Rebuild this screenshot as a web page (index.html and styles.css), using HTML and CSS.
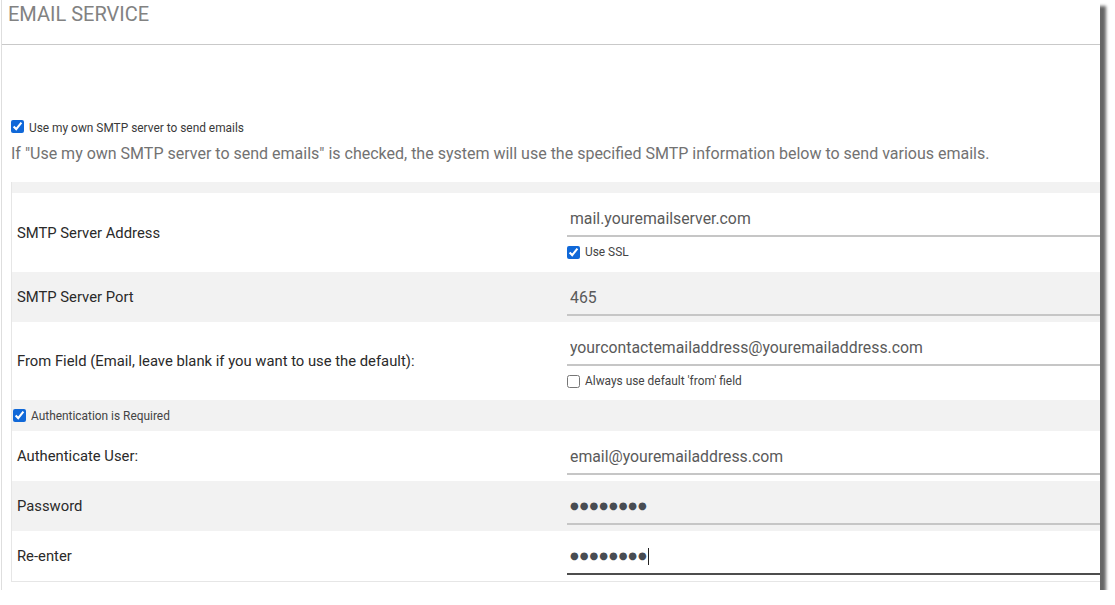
FILE: index.html
```html
<!DOCTYPE html>
<html lang="en">
<head>
<meta charset="utf-8">
<title>Email Service</title>
<link rel="stylesheet" href="styles.css">
</head>
<body>
<div class="frame">
  <header class="header">
    <h1 class="title">EMAIL SERVICE</h1>
  </header>
  <div class="content">
    <label class="top-check">
      <input type="checkbox" checked>
      <span>Use my own SMTP server to send emails</span>
    </label>
    <p class="desc">If "Use my own SMTP server to send emails" is checked, the system will use the specified SMTP information below to send various emails.</p>

    <div class="table">
      <div class="strip"></div>

      <div class="row">
        <div class="label">SMTP Server Address</div>
        <div class="value with-check">
          <input class="field" type="text" value="mail.youremailserver.com">
          <label class="sub-check"><input type="checkbox" checked><span>Use SSL</span></label>
        </div>
      </div>

      <div class="row alt">
        <div class="label">SMTP Server Port</div>
        <div class="value">
          <input class="field" type="text" value="465">
        </div>
      </div>

      <div class="row">
        <div class="label">From Field (Email, leave blank if you want to use the default):</div>
        <div class="value with-check short">
          <input class="field" type="text" value="yourcontactemailaddress@youremailaddress.com">
          <label class="sub-check"><input type="checkbox"><span>Always use default 'from' field</span></label>
        </div>
      </div>

      <div class="row alt auth">
        <label class="auth-check"><input type="checkbox" checked><span>Authentication is Required</span></label>
      </div>

      <div class="row">
        <div class="label">Authenticate User:</div>
        <div class="value">
          <input class="field" type="text" value="email@youremailaddress.com">
        </div>
      </div>

      <div class="row alt">
        <div class="label">Password</div>
        <div class="value">
          <div class="field pw">●●●●●●●●</div>
        </div>
      </div>

      <div class="row">
        <div class="label">Re-enter</div>
        <div class="value">
          <div class="field pw focused">●●●●●●●●<span class="caret"></span></div>
        </div>
      </div>
    </div>
  </div>
</div>
</body>
</html>
```

FILE: styles.css
```css
html, body {
  margin: 0;
  padding: 0;
  background: #ffffff;
}

body {
  font-family: Roboto, "Liberation Sans", Arial, sans-serif;
  color: #222222;
}

.frame {
  margin-left: 1px;
  width: 1099px;
  height: 590px;
  box-sizing: border-box;
  border-left: 1px solid #dedede;
  background: #ffffff;
  box-shadow: 6px 6px 3px rgba(0, 0, 0, 0.6);
  overflow: hidden;
}

.header {
  height: 45px;
  box-sizing: border-box;
  padding: 2px 6px 0;
  border-bottom: 1px solid #c9c9c9;
}

.title {
  margin: 0;
  font-size: 20px;
  line-height: 24px;
  font-weight: 400;
  color: #828282;
}

.content {
  padding: 75px 0 0 9px;
}

input[type="checkbox"] {
  width: 13px;
  height: 13px;
  margin: 0;
  flex: none;
  accent-color: #1068d8;
}

.top-check {
  display: flex;
  align-items: flex-start;
  height: 16px;
  font-size: 11.9px;
  line-height: 16px;
  color: #3a3a3a;
}

.top-check input {
  margin-right: 5px;
}

.desc {
  margin: 8px 0 0;
  font-size: 16px;
  line-height: 20px;
  color: #727272;
  white-space: nowrap;
}

.table {
  margin-top: 18px;
  border-left: 1px solid #e6e6e6;
  border-bottom: 1px solid #e6e6e6;
}

.strip {
  height: 11px;
  background: #f2f2f2;
}

.row {
  display: flex;
  align-items: center;
  background: #ffffff;
}

.row.alt {
  background: #f2f2f2;
}

.label {
  width: 555px;
  flex: none;
  box-sizing: border-box;
  padding-left: 5px;
  font-size: 14.8px;
  color: #2a2a2a;
}

.value {
  flex: 1;
  min-width: 0;
  padding: 8px 0 6px;
}

.value.with-check {
  padding-bottom: 7px;
}

.value.with-check.short {
  padding-bottom: 6px;
}

.field {
  display: block;
  width: 100%;
  height: 36px;
  box-sizing: border-box;
  margin: 0;
  padding: 0 3px;
  border: 0;
  border-bottom: 2px solid #c6c6c6;
  border-radius: 0;
  background: transparent;
  font-family: Roboto, "Liberation Sans", Arial, sans-serif;
  font-size: 15.8px;
  line-height: 34px;
  color: #5a5a5a;
  outline: none;
}

.field.pw {
  font-family: "DejaVu Sans", sans-serif;
  font-size: 10px;
  letter-spacing: 1px;
  color: #484c52;
  white-space: nowrap;
}

.field.focused {
  border-bottom-color: #4d4d4d;
}

.caret {
  display: inline-block;
  width: 1px;
  height: 17px;
  margin-left: 0;
  background: #222222;
  vertical-align: middle;
}

.sub-check {
  display: flex;
  align-items: center;
  height: 26px;
  margin-top: 2px;
  font-size: 11.9px;
  line-height: 14px;
  color: #444444;
}

.sub-check input {
  margin-right: 5px;
}

.row.auth {
  height: 31px;
}

.auth-check {
  display: flex;
  align-items: center;
  padding-left: 1px;
  font-size: 11.9px;
  line-height: 14px;
  color: #444444;
}

.auth-check input {
  margin-right: 5px;
}
```
